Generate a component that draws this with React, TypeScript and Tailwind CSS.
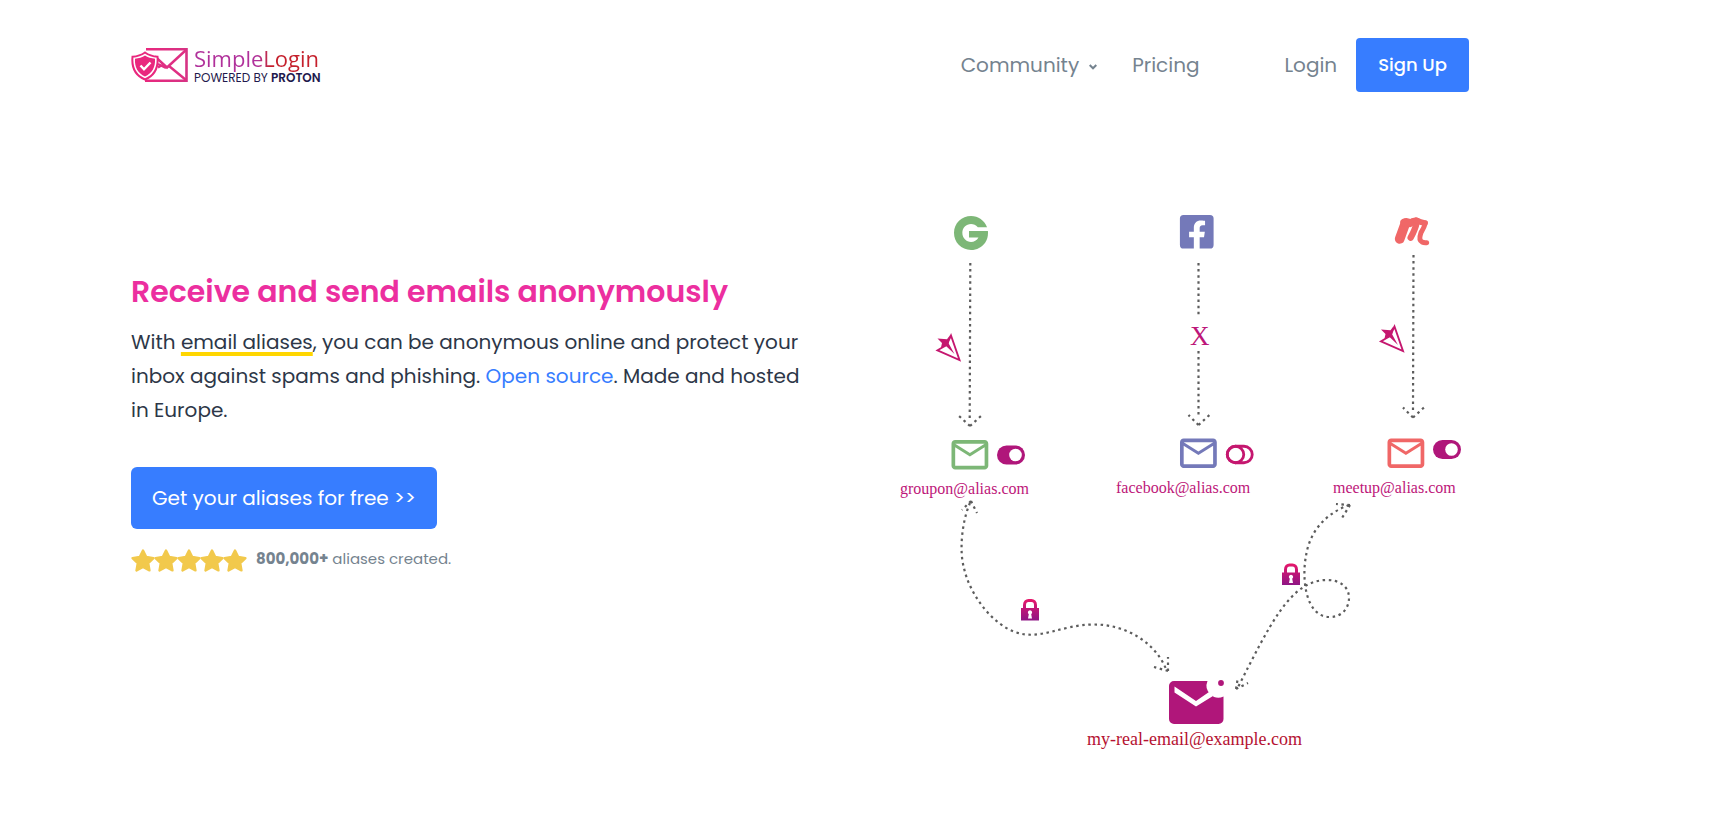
import { FaFacebookSquare } from "react-icons/fa";
import { SiGroupon } from "react-icons/si";

const serif = "font-['Liberation_Serif',serif]";

function Logo() {
  return (
    <a href="#" aria-label="SimpleLogin powered by Proton" className="flex items-center gap-1.5">
      <svg width="57" height="36" viewBox="0 0 57 36" fill="none">
        <defs>
          <linearGradient id="mark" x1="0" y1="0" x2="1" y2="0">
            <stop offset="0" stopColor="#e9287e" />
            <stop offset="1" stopColor="#d63384" />
          </linearGradient>
        </defs>
        <path d="M15 2.300H55.500V33.700H14" stroke="url(#mark)" strokeWidth="2.600" />
        <path d="M55 3L36 20.500 24 9.500M27 20.500l4-2.500M38 19l17 14M27 17l8 4" stroke="#df2f83" strokeWidth="2.400" />
        <path d="M14 5.500C17.500 8 22 9.500 26.500 9.800c1 10.500-3 18.700-12.500 22.700C4.500 28.500.5 20.300 1.500 9.800 6 9.500 10.500 8 14 5.500z" fill="#fff" stroke="#e9287e" strokeWidth="2" />
        <path d="M14 8.500c2.500 1.800 6.500 3 10 3.200.5 8.800-3 14.300-10 17.800-7-3.500-10.500-9-10-17.800 3.500-.2 7.500-1.400 10-3.200z" fill="#e9287e" />
        <path d="M9.500 18.500l3.500 3.800 6.500-6.800" stroke="#fff" strokeWidth="2.400" />
      </svg>
      <span className="flex flex-col">
        <span className="-mt-1 -mb-px bg-gradient-to-r from-[#b0309a] from-50% to-[#c5202c] to-60% bg-clip-text font-['Open_Sans',sans-serif] text-[22px] leading-[30px] text-transparent">SimpleLogin</span>
        <span className="text-[12px] leading-3 text-[#1f1a4d]">POWERED BY <b className="font-semibold">PROTON</b></span>
      </span>
    </a>
  );
}

function Star() {
  return (
    <svg width="23" height="24" viewBox="0 0 23 24" overflow="visible" aria-hidden="true">
      <path
        d="M12 1.500L15.230 8.050 22.460 9.100 17.230 14.200 18.470 21.400 12 18 5.530 21.400 6.770 14.200 1.540 9.100 8.770 8.050z"
        fill="#f2c94c"
        stroke="#f2c94c"
        strokeWidth="2.400"
        strokeLinejoin="round"
      />
    </svg>
  );
}

function Meetup() {
  return (
    <g transform="translate(1320 200) scale(.3333)" fill="none" stroke="#f06767" strokeLinecap="round" strokeLinejoin="round">
      <path d="M239 117L256 70" strokeWidth="29" />
      <path d="M252 67Q262 62 270 70Q280 62 290 64" strokeWidth="22" />
      <path d="M290 68Q286 88 272 113" strokeWidth="19" />
      <path d="M289 61Q302 68 315 69" strokeWidth="17" />
      <path d="M316 69Q313 82 303 98Q295 121 306 126Q312 129 320 128" strokeWidth="15" />
    </g>
  );
}

function Mail({ x, y, color }: { x: number; y: number; color: string }) {
  return (
    <path
      transform={`translate(${x} ${y}) scale(1.84) translate(-2 -4)`}
      fill={color}
      d="M22 6c0-1.100-.9-2-2-2H4c-1.100 0-2 .9-2 2v12c0 1.100.9 2 2 2h16c1.100 0 2-.9 2-2V6zm-2 0l-8 5-8-5h16zm0 12H4V8l8 5 8-5v10z"
    />
  );
}

function Toggle({ x, y, on }: { x: number; y: number; on: boolean }) {
  return on ? (
    <g transform={`translate(${x} ${y})`}>
      <rect width="28" height="19" rx="9.500" fill="#b0167a" />
      <circle cx="18.500" cy="9.500" r="6.300" fill="#fff" />
    </g>
  ) : (
    <g transform={`translate(${x} ${y})`} fill="none" stroke="#c5176f" strokeWidth="2.800">
      <rect x="1.250" y="1.250" width="25" height="16.500" rx="8.250" />
      <circle cx="9.500" cy="9.500" r="8.250" />
    </g>
  );
}

function Plane({ x, y }: { x: number; y: number }) {
  return (
    <g transform={`translate(${x} ${y})`}>
      <path d="M16 2.500L24.500 27 2.500 17.300 11.500 12z" fill="none" stroke="#c5176f" strokeWidth="1.900" />
      <path d="M2.500 5.500L12 6.300l3-4-1.300 8.200 5.800 10.500L11 13l-5 1.500L7 10z" fill="#c5176f" />
    </g>
  );
}

function Lock({ x, y }: { x: number; y: number }) {
  return (
    <g transform={`translate(${x} ${y})`}>
      <path d="M3.500 10V6c0-3 2-4.500 4-4.500h3c2 0 4 1.500 4 4.500v4" fill="none" stroke="url(#lock)" strokeWidth="3" />
      <path d="M0 9h18v12.500H0z" fill="url(#lock)" />
      <path d="M9 11.300a2.200 2.200 0 0 1 1.200 4l.8 4.200H7l.8-4.200A2.200 2.200 0 0 1 9 11.300z" fill="#fff" />
    </g>
  );
}

function Diagram() {
  return (
    <svg viewBox="869 200 600 560" className="w-[600px] max-w-full shrink-0" role="img" aria-label="Aliases forwarding to a real mailbox">
      <defs>
        <linearGradient id="lock" gradientUnits="userSpaceOnUse" x1="0" y1="0" x2="0" y2="22">
          <stop offset="0" stopColor="#e8176a" />
          <stop offset="1" stopColor="#8c1585" />
        </linearGradient>
      </defs>

      <SiGroupon x="954" y="216" size="34" color="#7db777" />
      <FaFacebookSquare x="1177.500" y="212.500" size="38.500" color="#7479b9" />
      <Meetup />

      <g fill="none" stroke="#5c5c5c" strokeWidth="2.200" strokeDasharray="2.500 3.600">
        <path d="M970.300 263L969.700 420M970 426l-11-10M970 426l11-10" />
        <path d="M1198.500 263V316M1198.500 351V416M1198.500 425l-10-10M1198.500 425l11-10" />
        <path d="M1413.500 255L1413 410M1413 417.500l-10-10M1413 417.500l11-10" />
        <path d="M970 503C962 521 959 551 964 568C969 592 990 623 1015 632C1040 641 1060 625 1093 624.500C1125 624 1155 642 1166 669" />
        <path d="M971 501l-9 9M971 501l6 12M1168 671l-14-4M1168 671v-14" />
        <path d="M1349 505C1322 515 1309 535 1306 556C1302 575 1304 617 1330 617C1342 617 1349 608 1349 598C1349 586 1339 580 1327 580C1290 580 1270 625 1237 689" />
        <path d="M1350 505l-14-1M1350 505l-8 13M1236 689l2-12M1236 689l12-6" />
      </g>

      <Plane x={935} y={333} />
      <Plane x={1378.5} y={324} />
      <text x="1190" y="345" fontSize="27" fill="#bd1679" className={serif}>X</text>

      <Mail x={951.5} y={440} color="#7db777" />
      <Mail x={1180} y={438.5} color="#7479b9" />
      <Mail x={1387.5} y={438.5} color="#f06767" />
      <Toggle x={997} y={445.5} on />
      <Toggle x={1226} y={445} on={false} />
      <Toggle x={1433} y={440} on />

      <g fontSize="16" fill="#bd1679" className={serif}>
        <text x="900" y="494">groupon@alias.com</text>
        <text x="1116" y="493">facebook@alias.com</text>
        <text x="1333" y="493">meetup@alias.com</text>
      </g>

      <Lock x={1021} y={599} />
      <Lock x={1282} y={563.5} />

      <path d="M1174 681H1207.500A12 12 0 0 0 1223.500 696.500V719a5 5 0 0 1-5 5H1174a5 5 0 0 1-5-5V686a5 5 0 0 1 5-5z" fill="#b0167a" />
      <path d="M1174.500 686.500L1196 701 1209 692 1213 696 1196 706.500 1174.500 692.500z" fill="#fff" />
      <circle cx="1221" cy="683" r="2.900" fill="#b0167a" />
      <text x="1087" y="745" fontSize="18" fill="#b51232" className={serif}>my-real-email@example.com</text>
    </svg>
  );
}

export default function App() {
  return (
    <div className="max-w-[1600px] bg-white px-[131px] font-['Poppins','Inter',sans-serif] text-[#2d3748]">
      <header className="flex items-center justify-between pt-[38px]">
        <Logo />
        <nav className="flex items-center text-xl text-[#75838f]">
          <button type="button" className="flex items-center gap-2.5">
            Community
            <svg width="8" height="6" viewBox="0 0 8 6" className="mt-1" fill="none" stroke="currentColor" strokeWidth="2" aria-hidden="true">
              <path d="M.7 1L4 4.300 7.300 1" />
            </svg>
          </button>
          <a href="#" className="ml-[35px]">Pricing</a>
          <a href="#" className="ml-[85px]">Login</a>
          <a href="#" className="ml-[19px] rounded bg-[#377dff] px-[22px] py-3 text-lg leading-[30px] font-medium text-white">Sign Up</a>
        </nav>
      </header>

      <main className="flex items-start justify-between pt-[108px]">
        <section className="w-[680px] pt-[72px]">
          <h1 className="text-[30px] leading-10 font-semibold text-[#ec2f9f]">Receive and send emails anonymously</h1>
          <p className="mt-[13px] text-xl leading-[34px]">
            With <span className="underline decoration-[#ffd600] decoration-4 underline-offset-[3px]">email aliases</span>, you can be anonymous online and protect your inbox against spams and phishing.{" "}
            <a href="#" className="text-[#377dff]">Open source</a>. Made and hosted in Europe.
          </p>
          <a href="#" className="mt-10 inline-block rounded-md bg-[#377dff] px-[21px] py-4 text-xl leading-[30px] text-white">Get your aliases for free &gt;&gt;</a>
          <div className="mt-5 flex items-start gap-2.5 text-[15px] leading-5 text-[#75838f]">
            <span className="flex">
              {[0, 1, 2, 3, 4].map((i) => <Star key={i} />)}
            </span>
            <span><b>800,000+</b> aliases created.</span>
          </div>
        </section>
        <Diagram />
      </main>
    </div>
  );
}
